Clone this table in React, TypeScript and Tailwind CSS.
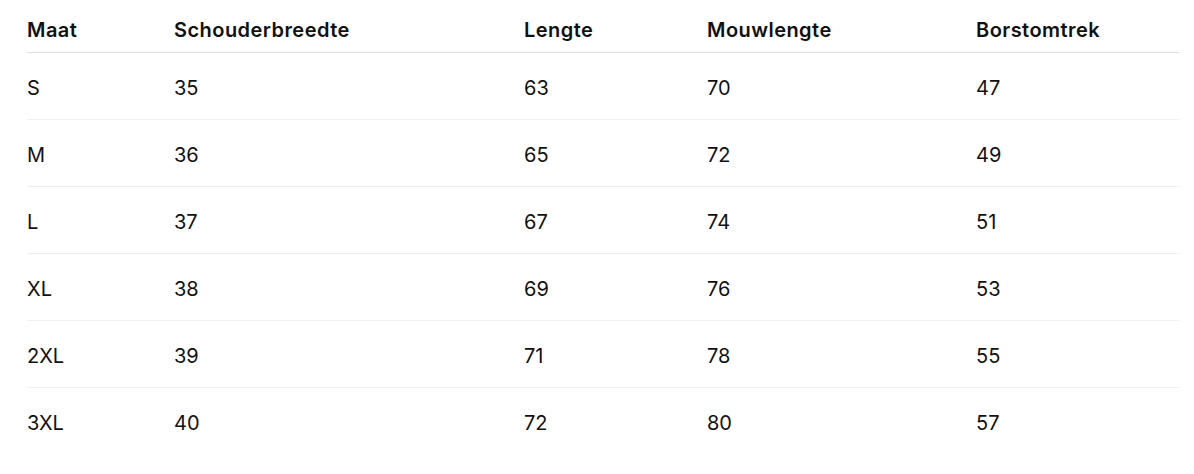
import React from 'react';

const rows = [
  ['S', '35', '63', '70', '47'],
  ['M', '36', '65', '72', '49'],
  ['L', '37', '67', '74', '51'],
  ['XL', '38', '69', '76', '53'],
  ['2XL', '39', '71', '78', '55'],
  ['3XL', '40', '72', '80', '57'],
];

const headers = ['Maat', 'Schouderbreedte', 'Lengte', 'Mouwlengte', 'Borstomtrek'];

const cols = 'grid grid-cols-[147px_350px_183px_269px_1fr]';

export default function App() {
  return (
    <div className="min-h-screen bg-white px-[27px] text-[#111] font-['Inter','Liberation_Sans',sans-serif]">
      <div className="w-[1152px]">
        {/* header */}
        <div className={`${cols} border-b border-[#dcdcdc] pt-[18px] pb-[10px]`}>
          {headers.map((h) => (
            <div key={h} className="text-[20px] leading-6 font-semibold tracking-[0.45px]">
              {h}
            </div>
          ))}
        </div>

        {/* body */}
        {rows.map((r, i) => (
          <div
            key={r[0]}
            className={`${cols} h-[67px] items-center pt-[3px] ${i < rows.length - 1 ? 'border-b border-[#f0f0f0]' : ''}`}
          >
            {r.map((c, j) => (
              <div key={j} className="text-[20px] leading-6">
                {c}
              </div>
            ))}
          </div>
        ))}
      </div>
    </div>
  );
}
